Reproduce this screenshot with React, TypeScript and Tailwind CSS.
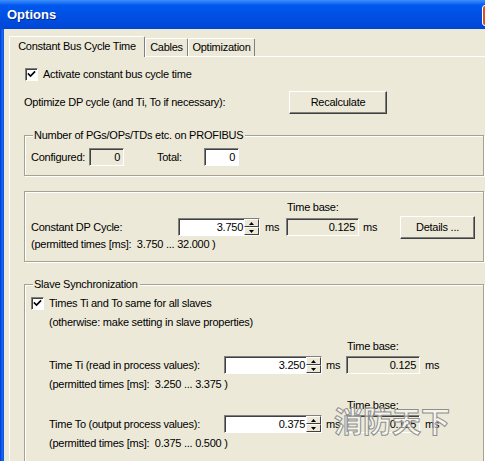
import type { ReactNode } from 'react'
import { clsx } from 'clsx'

function CheckBox({ className }: { className?: string }) {
  return (
    <div
      className={clsx(
        'flex h-[13px] w-[13px] shrink-0 items-center justify-center border border-t-[#808080] border-l-[#808080] border-b-white border-r-white bg-white shadow-[inset_1px_1px_0_#404040]',
        className,
      )}
    >
      <svg width="9" height="9" viewBox="0 0 9 9">
        <path d="M1.5 4 L3.5 6 L7.5 2" stroke="#000" strokeWidth="1.7" fill="none" strokeLinecap="square" />
      </svg>
    </div>
  )
}

function Field({ value, gray, className }: { value: string; gray?: boolean; className?: string }) {
  return (
    <div
      className={clsx(
        'flex h-[18px] shrink-0 items-center justify-end border border-t-[#808080] border-l-[#808080] border-b-white border-r-white pr-[3px] shadow-[inset_1px_1px_0_#404040]',
        gray ? 'bg-[#ece9d8]' : 'bg-white',
        className,
      )}
    >
      {value}
    </div>
  )
}

function SpinArrow({ up }: { up?: boolean }) {
  return (
    <div className="flex h-[8px] items-center justify-center border border-t-white border-l-white border-b-[#404040] border-r-[#404040] bg-[#ece9d8]">
      <svg width="5" height="3" viewBox="0 0 5 3">
        <path d={up ? 'M2.5 0 L5 3 L0 3 Z' : 'M0 0 L5 0 L2.5 3 Z'} fill="#000" />
      </svg>
    </div>
  )
}

function SpinField({ value, className }: { value: string; className?: string }) {
  return (
    <div
      className={clsx(
        'flex h-[18px] shrink-0 border border-t-[#808080] border-l-[#808080] border-b-white border-r-white bg-white shadow-[inset_1px_1px_0_#404040]',
        className,
      )}
    >
      <div className="flex flex-1 items-center justify-end pr-[1px]">{value}</div>
      <div className="flex w-[15px] flex-col">
        <SpinArrow up />
        <SpinArrow />
      </div>
    </div>
  )
}

function Button({ children, className }: { children: ReactNode; className?: string }) {
  return (
    <div
      className={clsx(
        'flex h-[23px] shrink-0 items-center justify-center border border-t-white border-l-white border-b-[#404040] border-r-[#404040] bg-[#ece9d8] shadow-[inset_-1px_-1px_0_#808080]',
        className,
      )}
    >
      {children}
    </div>
  )
}

function Group({ label, className, children }: { label?: string; className?: string; children: ReactNode }) {
  return (
    <div className={clsx('relative w-[460px] border border-[#a5a294] shadow-[inset_1px_1px_0_#fff,1px_1px_0_#fff]', className)}>
      {label && (
        <span className="absolute left-[8px] top-[-7px] bg-[#ece9d8] pl-[1px] pr-[2px] leading-[13px]">{label}</span>
      )}
      {children}
    </div>
  )
}

function TimeRow({
  label,
  value,
  permitted,
  base,
}: {
  label: string
  value: string
  permitted: string
  base: string
}) {
  return (
    <>
      <div className="ml-[316px] leading-[13px]">Time base:</div>
      <div className="mt-[3px] flex h-[18px] items-center pl-[18px]">
        <span className="w-[175px] shrink-0">{label}</span>
        <SpinField value={value} className="w-[98px]" />
        <span className="ml-[4px] w-[20px] shrink-0">ms</span>
        <Field value={base} gray className="w-[74px]" />
        <span className="ml-[5px]">ms</span>
      </div>
      <div className="mt-[4px] pl-[18px] leading-[13px] whitespace-pre">{permitted}</div>
    </>
  )
}

export default function App() {
  return (
    <div className="relative h-[461px] w-[485px] overflow-hidden bg-[#ece9d8] font-['Liberation_Sans',Arial,sans-serif] text-[11px] tracking-[-0.25px] text-black">
      {/* title bar */}
      <div className="relative flex h-[29px] items-center bg-gradient-to-b from-[#3d8ffb] from-[0%] via-[#0058ee] via-[18%] to-[#0046d6] pl-[7px]">
        <span className="text-[13px] font-bold tracking-normal text-white [text-shadow:1px_1px_0_#0a2a8a]">Options</span>
        <div className="absolute left-[482px] top-[5px] h-[21px] w-[21px] rounded-[3px] border border-white bg-[#e0501e]" />
      </div>

      <div className="flex h-[432px]">
        <div className="w-[4px] shrink-0 bg-gradient-to-r from-[#0831d9] via-[#166aee] to-[#0855dd]" />
        <div className="flex-1 pl-[5px] pt-[7px]">
          {/* tabs */}
          <div className="flex h-[20px] items-end">
            <div className="relative z-10 -mb-px flex h-[21px] w-[136px] items-center justify-center rounded-t-[2px] border border-b-0 border-l-white border-t-white border-r-[#808080] bg-[#ece9d8] pb-[2px]">
              Constant Bus Cycle Time
            </div>
            <div className="flex h-[18px] w-[43px] items-center justify-center rounded-t-[2px] border border-b-0 border-l-white border-t-white border-r-[#808080]">
              Cables
            </div>
            <div className="flex h-[18px] w-[67px] items-center justify-center rounded-t-[2px] border border-b-0 border-l-white border-t-white border-r-[#808080]">
              Optimization
            </div>
          </div>

          {/* panel */}
          <div className="h-[420px] border-l border-t border-white pl-[14px] pt-[11px]">
            <div className="flex h-[13px] items-center">
              <CheckBox className="ml-[1px]" />
              <span className="ml-[5px]">Activate constant bus cycle time</span>
            </div>

            <div className="mt-[10px] flex h-[23px] items-center">
              <span className="w-[265px]">Optimize DP cycle (and Ti, To if necessary):</span>
              <Button className="w-[98px]">Recalculate</Button>
            </div>

            <Group label="Number of PGs/OPs/TDs etc. on PROFIBUS" className="mt-[21px] h-[41px]">
              <div className="mt-[12px] flex h-[18px] items-center pl-[6px]">
                <span className="w-[58px]">Configured:</span>
                <Field value="0" gray className="w-[35px]" />
                <span className="ml-[33px] w-[47px]">Total:</span>
                <Field value="0" className="w-[35px]" />
              </div>
            </Group>

            <Group className="mt-[15px] h-[71px]">
              <div className="pl-[6px] pt-[9px]">
                <div className="ml-[256px] leading-[13px]">Time base:</div>
                <div className="mt-[4px] flex h-[18px] items-center">
                  <span className="w-[147px] shrink-0">Constant DP Cycle:</span>
                  <SpinField value="3.750" className="w-[82px]" />
                  <span className="ml-[5px] w-[21px] shrink-0">ms</span>
                  <Field value="0.125" gray className="w-[73px]" />
                  <span className="ml-[4px] w-[37px] shrink-0">ms</span>
                  <Button className="w-[75px]">Details ...</Button>
                </div>
                <div className="mt-[2px] leading-[13px] whitespace-pre">(permitted times [ms]:  3.750 ... 32.000 )</div>
              </div>
            </Group>

            <Group label="Slave Synchronization" className="mt-[22px] h-[180px]">
              <div className="pl-[6px] pt-[12px]">
                <div className="flex h-[13px] items-center">
                  <CheckBox />
                  <span className="ml-[5px]">Times Ti and To same for all slaves</span>
                </div>
                <div className="mt-[6px] pl-[18px] leading-[13px]">(otherwise: make setting in slave properties)</div>
                <div className="mt-[11px]">
                  <TimeRow
                    label="Time Ti (read in process values):"
                    value="3.250"
                    permitted="(permitted times [ms]:  3.250 ... 3.375 )"
                    base="0.125"
                  />
                </div>
                <div className="mt-[8px]">
                  <TimeRow
                    label="Time To (output process values):"
                    value="0.375"
                    permitted="(permitted times [ms]:  0.375 ... 0.500 )"
                    base="0.125"
                  />
                </div>
              </div>
            </Group>
          </div>
        </div>
      </div>

      {/* watermark */}
      <span className="pointer-events-none absolute left-[334px] top-[402px] font-['Noto_Sans_CJK_SC',sans-serif] text-[29px] font-bold leading-[36px] tracking-normal text-white/50 [-webkit-text-stroke:1px_#8f8f8f]">
        消防天下
      </span>
    </div>
  )
}
